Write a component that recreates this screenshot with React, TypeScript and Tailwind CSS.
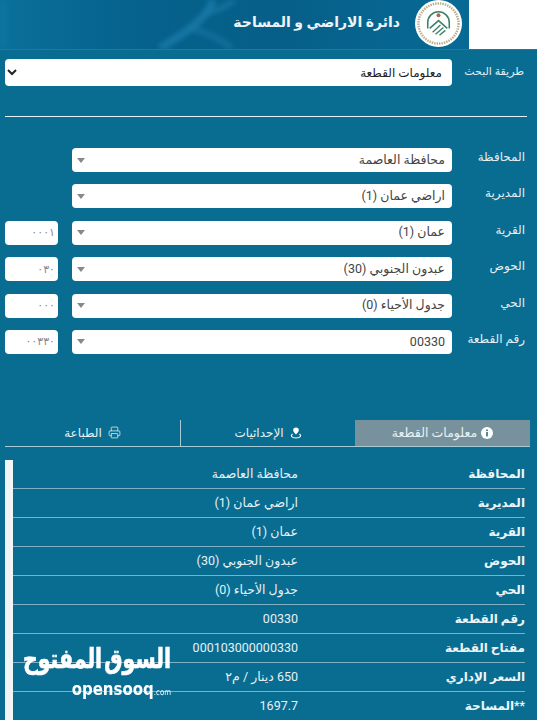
import { Printer } from 'lucide-react'

const SEARCH_FIELDS = [
  { label: 'المحافظة', value: 'محافظة العاصمة', code: '' },
  { label: 'المديرية', value: 'اراضي عمان (1)', code: '' },
  { label: 'القرية', value: 'عمان (1)', code: '٠٠٠١' },
  { label: 'الحوض', value: 'عبدون الجنوبي (30)', code: '٠٣٠' },
  { label: 'الحي', value: 'جدول الأحياء (0)', code: '٠٠٠' },
  { label: 'رقم القطعة', value: '00330', code: '٠٠٣٣٠' },
]

const DETAILS = [
  { label: 'المحافظة', value: 'محافظة العاصمة' },
  { label: 'المديرية', value: 'اراضي عمان (1)' },
  { label: 'القرية', value: 'عمان (1)' },
  { label: 'الحوض', value: 'عبدون الجنوبي (30)' },
  { label: 'الحي', value: 'جدول الأحياء (0)' },
  { label: 'رقم القطعة', value: '00330' },
  { label: 'مفتاح القطعة', value: '000103000000330' },
  { label: 'السعر الإداري', value: '650 دينار / م٢' },
  { label: '**المساحة', value: '1697.7' },
]

function Emblem() {
  return (
    <svg viewBox="0 0 48 48" className="h-[47px] w-[47px] shrink-0">
      <circle cx="24" cy="24" r="24" fill="#fff" />
      <circle cx="24" cy="24" r="20.5" fill="none" stroke="#b9b08f" strokeWidth="2.5" strokeDasharray="1.5 1" />
      <path d="M13 29 V23 A11 11 0 0 1 35 23 V29" fill="none" stroke="#3f8068" strokeWidth="1.6" />
      <circle cx="24" cy="15.5" r="2" fill="#b5653f" />
      <path d="M15 29 L24 21 L33 29" fill="none" stroke="#3f8068" strokeWidth="1.6" />
      <path d="M18 33 L26 25.5 M21 35 L29 28 M25 36 L31 31" stroke="#3f8068" strokeWidth="1.4" />
    </svg>
  )
}

function HeaderPattern() {
  return (
    <svg viewBox="0 0 469 49" className="pointer-events-none absolute inset-0 h-full w-full blur-[2px]" fill="none">
      <path d="M160 49 C178 36 192 30 205 14 C210 8 212 3 212 0" stroke="#1d7dab" strokeWidth="8" opacity="0.7" />
      <path d="M205 14 C220 10 228 5 235 0" stroke="#1d7dab" strokeWidth="6" opacity="0.55" />
      <path d="M192 28 C205 34 218 36 232 49" stroke="#1d7dab" strokeWidth="7" opacity="0.45" />
      <path d="M0 0 V49" stroke="#0f7aa6" strokeWidth="14" opacity="0.5" />
    </svg>
  )
}

function InfoDot() {
  return (
    <svg viewBox="0 0 12 12" className="h-[12px] w-[12px]">
      <circle cx="6" cy="6" r="6" fill="#fff" />
      <rect x="5.1" y="5" width="1.8" height="4.4" fill="#3f7f96" />
      <rect x="5.1" y="2.5" width="1.8" height="1.6" fill="#3f7f96" />
    </svg>
  )
}

function PinIcon() {
  return (
    <svg viewBox="0 0 12 12" className="h-[12px] w-[12px]" fill="none">
      <path d="M6 0.5 A2.8 2.8 0 0 1 8.8 3.3 C8.8 5 6 7.5 6 7.5 C6 7.5 3.2 5 3.2 3.3 A2.8 2.8 0 0 1 6 0.5 Z" fill="#fff" />
      <path d="M2.5 7 C0.5 8.5 1 11 6 11 C11 11 11.5 8.5 9.5 7" stroke="#fff" strokeWidth="1.1" />
    </svg>
  )
}

export default function App() {
  return (
    <div dir="rtl" className="relative h-[720px] w-[537px] overflow-hidden bg-[#096d92] text-white" style={{ fontFamily: 'Roboto, "DejaVu Sans", sans-serif' }}>
      <header className="flex h-[50px] border-b border-[#3b7184]">
        <div className="w-[68px] bg-white" />
        <div className="relative flex flex-1 items-start gap-[15px] overflow-hidden bg-[linear-gradient(90deg,#0a6f9b_0%,#05628c_30%,#065f88_60%,#076a95_100%)] pr-[7px]">
          <HeaderPattern />
          <div className="relative flex items-start gap-[15px]">
            <Emblem />
            <h1 className="mt-[12px] text-[14px] font-semibold text-[#eef5f7]">دائرة الاراضي و المساحة</h1>
          </div>
        </div>
      </header>

      <section className="px-[5px] pt-[9px]">
        <div className="flex items-center">
          <label className="w-[80px] shrink-0 pr-[8px] text-[11px] whitespace-nowrap text-[#e4eff3]">طريقة البحث</label>
          <select className="h-[27px] flex-1 rounded-[4px] bg-white pr-[6px] pl-[1px] text-[12px] text-[#222]" defaultValue="info">
            <option value="info">معلومات القطعة</option>
          </select>
        </div>
        <hr className="mt-[30px] mr-[5px] border-t-[1.5px] border-[#e6f1f5]" />

        <div className="mt-[31px] flex flex-col gap-[12.4px]">
          {SEARCH_FIELDS.map((field) => (
            <div key={field.label} className="flex h-[24px] items-start">
              <label className="w-[80px] shrink-0 pr-[7px] text-[12px] whitespace-nowrap text-[#e4eff3]">{field.label}</label>
              <div className="flex h-[24px] w-[380px] items-center justify-between rounded-[4px] bg-white pr-[7px] pl-[5px] text-[12.5px] text-[#444]">
                <span>{field.value}</span>
                <span className="h-0 w-0 border-x-[4px] border-t-[5px] border-x-transparent border-t-[#888]" />
              </div>
              {field.code && (
                <input
                  readOnly
                  value={field.code}
                  dir="ltr"
                  className="mr-[14px] h-[24px] w-[53px] rounded-[4px] bg-white pr-[3px] text-right text-[11px] text-[#888]"
                />
              )}
            </div>
          ))}
        </div>
      </section>

      <nav className="mt-[66px] mr-[7px] ml-[5px] flex h-[27px] border-b border-[#a9cbd8] text-[12px] text-[#e6f1f5]">
        <div className="flex w-[175px] items-center justify-center gap-[4px] bg-[#78929d] text-[12.5px]">
          <InfoDot />
          معلومات القطعة
        </div>
        <div className="flex w-[175px] items-center justify-center gap-[6px] border-l border-[#a9cbd8]">
          <PinIcon />
          الإحداثيات
        </div>
        <div className="flex w-[175px] items-center justify-center gap-[6px]">
          <Printer size={13} strokeWidth={1.4} />
          الطباعة
        </div>
      </nav>

      <section className="mt-[13px] mr-[12px] ml-[5px] border-l-[8px] border-[#f1f5f6]">
        {DETAILS.map((row) => (
          <div key={row.label} className="flex h-[29px] items-center border-b border-[#7fb0c3]">
            <span className="w-[227px] shrink-0 text-[12px] font-bold whitespace-nowrap text-[#eef5f7]">{row.label}</span>
            <span className="text-[12.5px] text-[#e6f1f5]">{row.value}</span>
          </div>
        ))}
      </section>

      <div dir="ltr" className="absolute top-[650px] left-[25px] flex w-[146px] flex-col items-end text-white">
        <span dir="rtl" className="origin-bottom scale-y-[1.35] text-[20.5px] leading-[26px] font-bold whitespace-nowrap [-webkit-text-stroke:0.5px_white] [word-spacing:-3px]">السوق المفتوح</span>
        <span className="mt-[5px] origin-top scale-y-[1.2] text-[15px] leading-[15px] font-bold [font-family:'DejaVu_Sans',sans-serif]">opensooq<span className="text-[7px] font-normal">.com</span></span>
      </div>
    </div>
  )
}
